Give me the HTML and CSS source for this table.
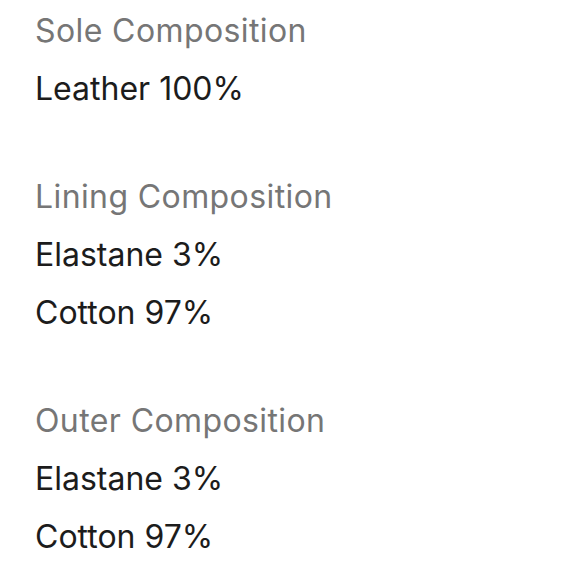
FILE: index.html
```html
<!DOCTYPE html>
<html>
<head>
<meta charset="utf-8">
<link rel="stylesheet" href="styles.css">
</head>
<body>
<div class="list">
  <section class="group">
    <div class="label">Sole Composition</div>
    <div class="value">Leather 100%</div>
  </section>
  <section class="group">
    <div class="label">Lining Composition</div>
    <div class="value">Elastane 3%</div>
    <div class="value">Cotton 97%</div>
  </section>
  <section class="group">
    <div class="label">Outer Composition</div>
    <div class="value">Elastane 3%</div>
    <div class="value">Cotton 97%</div>
  </section>
</div>
</body>
</html>
```
FILE: styles.css
```css
html, body {
  margin: 0;
  padding: 0;
  background: #ffffff;
}
.list {
  padding: 2px 0 0 35px;
  display: flex;
  flex-direction: column;
  gap: 50px;
  font-family: Inter, "Noto Sans", sans-serif;
  font-size: 32px;
  line-height: 58px;
}
.label {
  color: #767676;
  letter-spacing: 0.4px;
}
.value {
  color: #1c1c1c;
}
```
